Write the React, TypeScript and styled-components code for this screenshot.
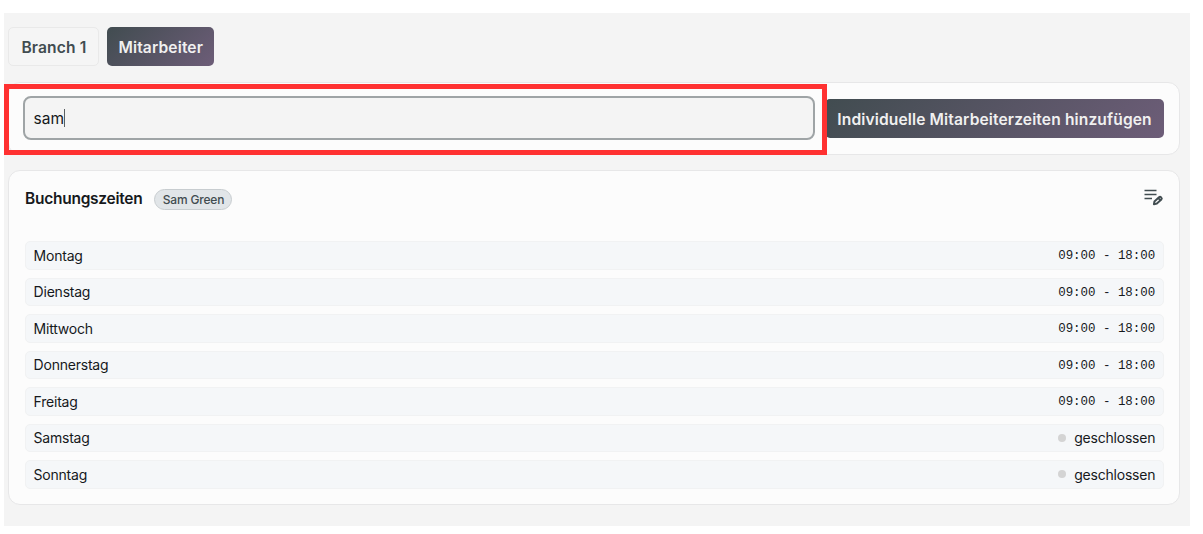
import React from "react";
import styled, { createGlobalStyle } from "styled-components";

const GlobalStyle = createGlobalStyle`
  * {
    box-sizing: border-box;
  }

  body {
    margin: 0;
    background: #ffffff;
    font-family: Inter, "Liberation Sans", sans-serif;
    color: #16191c;
  }
`;

const Page = styled.main`
  width: 1186px;
  height: 513px;
  margin: 13px 0 0 4px;
  padding: 14px 10px 0 4.4px;
  background: #f4f4f4;
`;

const Tabs = styled.nav`
  display: flex;
  gap: 7.6px;
  margin-bottom: 16px;
`;

const Button = styled.button<{ $primary?: boolean; $width: number }>`
  width: ${({ $width }) => $width}px;
  height: 39px;
  padding: 1px 0 0;
  flex-shrink: 0;
  border: ${({ $primary }) => ($primary ? "none" : "1px solid #e9e9e9")};
  border-radius: 5px;
  background: ${({ $primary }) =>
    $primary ? "linear-gradient(135deg, #414c50, #6d5d78)" : "#f5f5f5"};
  color: ${({ $primary }) => ($primary ? "#f0f0f0" : "#414c50")};
  font-family: inherit;
  font-size: 15.6px;
  font-weight: 600;
  letter-spacing: 0.12px;
  white-space: nowrap;
`;

const Card = styled.section`
  border: 1px solid #e7e7e8;
  border-radius: 12px;
  background: #fcfcfc;
`;

const SearchCard = styled(Card)`
  position: relative;
  display: flex;
  align-items: center;
  justify-content: space-between;
  height: 73px;
  margin-bottom: 15px;
  padding: 0 15.2px 0 13.6px;
`;

const SearchField = styled.div`
  display: flex;
  align-items: center;
  width: 792px;
  height: 44px;
  margin-bottom: 1px;
  padding-left: 8.6px;
  border: 2px solid #9fa4a6;
  border-radius: 8px;
  background: #f4f4f4;
  font-size: 15.5px;
`;

const Caret = styled.span`
  width: 1px;
  height: 18px;
  background: #5b6062;
`;

const Highlight = styled.div`
  position: absolute;
  top: 1.4px;
  left: -5.4px;
  width: 823px;
  height: 71px;
  border: 5px solid #ff3131;
  pointer-events: none;
`;

const HoursCard = styled(Card)`
  height: 335px;
  padding: 15px 15.2px 0 15.6px;
`;

const HoursHeader = styled.header`
  display: flex;
  align-items: center;
  height: 24px;
  margin-bottom: 31px;
`;

const Title = styled.h2`
  margin: 0;
  font-size: 15.5px;
  font-weight: 600;
  letter-spacing: -0.26px;
`;

const Chip = styled.span`
  display: flex;
  align-items: center;
  justify-content: center;
  width: 78px;
  height: 21px;
  margin: 2px 0 0 12px;
  border: 1px solid #c8cdd0;
  border-radius: 11px;
  background: #e1e5e8;
  color: #414c50;
  font-size: 12px;
  font-weight: 500;
  letter-spacing: -0.18px;
`;

const EditIcon = styled.svg`
  width: 20px;
  height: 20px;
  margin: -4px 0 0 auto;
  fill: none;
  stroke: #414c50;
`;

const DayList = styled.ul`
  display: flex;
  flex-direction: column;
  gap: 8px;
  margin: 0;
  padding: 0;
  list-style: none;
`;

const DayRow = styled.li`
  display: flex;
  align-items: center;
  justify-content: space-between;
  height: 28.5px;
  padding: 0 7.6px;
  border: 1px solid #f1f2f3;
  border-radius: 5px;
  background: #f5f7f9;
  font-size: 14px;
  letter-spacing: -0.22px;
`;

const Time = styled.span`
  padding-top: 2px;
  font-family: "Liberation Mono", monospace;
  font-size: 12.45px;
  letter-spacing: 0;
`;

const Closed = styled.span`
  display: flex;
  align-items: center;
  gap: 8px;

  &::before {
    content: "";
    width: 8px;
    height: 8px;
    border-radius: 50%;
    background: #d4d4d4;
  }
`;

const days = [
  { name: "Montag", time: "09:00 - 18:00" },
  { name: "Dienstag", time: "09:00 - 18:00" },
  { name: "Mittwoch", time: "09:00 - 18:00" },
  { name: "Donnerstag", time: "09:00 - 18:00" },
  { name: "Freitag", time: "09:00 - 18:00" },
  { name: "Samstag" },
  { name: "Sonntag" },
];

const App = () => {
  return (
    <>
      <GlobalStyle />
      <Page>
        <Tabs>
          <Button $width={91}>Branch 1</Button>
          <Button $primary $width={107.5}>
            Mitarbeiter
          </Button>
        </Tabs>
        <SearchCard>
          <SearchField>
            sam
            <Caret />
          </SearchField>
          <Button $primary $width={338.5}>
            Individuelle Mitarbeiterzeiten hinzufügen
          </Button>
          <Highlight />
        </SearchCard>
        <HoursCard>
          <HoursHeader>
            <Title>Buchungszeiten</Title>
            <Chip>Sam Green</Chip>
            <EditIcon viewBox="0 0 20 20">
              <path
                d="M.5 4.5h12M.5 8.5h12M.5 12.5h7.5"
                strokeWidth="1.4"
              />
              <path
                d="m9.9 18.2.5-2.7 4.6-4.3c1.4-1.2 3.7.8 2.4 2.3l-4.5 4-3 .7Zm4.2-6.2 2.6 2.3"
                strokeWidth="1.9"
                strokeLinejoin="round"
              />
            </EditIcon>
          </HoursHeader>
          <DayList>
            {days.map((day) => (
              <DayRow key={day.name}>
                <span>{day.name}</span>
                {day.time ? (
                  <Time>{day.time}</Time>
                ) : (
                  <Closed>geschlossen</Closed>
                )}
              </DayRow>
            ))}
          </DayList>
        </HoursCard>
      </Page>
    </>
  );
};

export default App;
